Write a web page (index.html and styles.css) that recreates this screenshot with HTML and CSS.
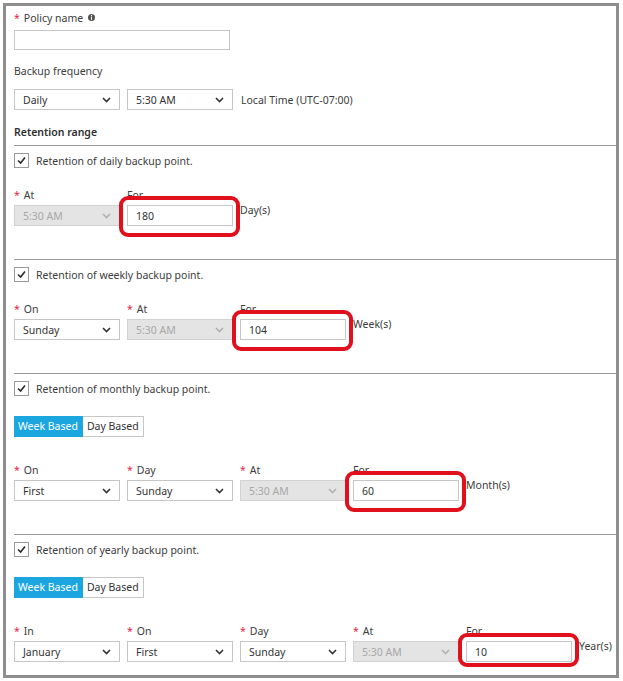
FILE: index.html
```html
<!DOCTYPE html>
<html lang="en">
<head>
    <meta charset="UTF-8">
    <meta name="viewport" content="width=device-width, initial-scale=1.0">
    <title>Backup Policy</title>
    <link rel="stylesheet" href="styles.css">
</head>
<body>
    <div class="panel">
        <div class="top-field">
            <label class="req">Policy name
                <svg class="info" width="7" height="7" viewBox="0 0 7 7"><circle cx="3.5" cy="3.5" r="3.5" fill="#555"/><rect x="3" y="1" width="1" height="1" fill="#fff"/><rect x="3" y="2.6" width="1" height="3.2" fill="#fff"/></svg>
            </label>
            <input class="text-input wide" type="text">
        </div>

        <div class="top-field freq">
            <label>Backup frequency</label>
            <div class="freq-row">
                <div class="select">Daily<svg class="chev" viewBox="0 0 9 6"><path d="M1 1l3.5 3.5L8 1"/></svg></div>
                <div class="select">5:30 AM<svg class="chev" viewBox="0 0 9 6"><path d="M1 1l3.5 3.5L8 1"/></svg></div>
                <span class="note">Local Time (UTC-07:00)</span>
            </div>
        </div>

        <h3>Retention range</h3>

        <!-- daily -->
        <div class="retention">
            <div class="check-row"><span class="checkbox"><svg viewBox="0 0 15 15"><path d="M3.5 7.5l3 3 5-6.5"/></svg></span>Retention of daily backup point.</div>
            <div class="fields">
                <div class="field">
                    <label class="req">At</label>
                    <div class="select disabled">5:30 AM<svg class="chev" viewBox="0 0 9 6"><path d="M1 1l3.5 3.5L8 1"/></svg></div>
                </div>
                <div class="field">
                    <label>For</label>
                    <div class="control">
                        <span class="marked"><input class="text-input" type="text" value="180"></span>
                        <span class="unit">Day(s)</span>
                    </div>
                </div>
            </div>
        </div>

        <!-- weekly -->
        <div class="retention">
            <div class="check-row"><span class="checkbox"><svg viewBox="0 0 15 15"><path d="M3.5 7.5l3 3 5-6.5"/></svg></span>Retention of weekly backup point.</div>
            <div class="fields">
                <div class="field">
                    <label class="req">On</label>
                    <div class="select">Sunday<svg class="chev" viewBox="0 0 9 6"><path d="M1 1l3.5 3.5L8 1"/></svg></div>
                </div>
                <div class="field">
                    <label class="req">At</label>
                    <div class="select disabled">5:30 AM<svg class="chev" viewBox="0 0 9 6"><path d="M1 1l3.5 3.5L8 1"/></svg></div>
                </div>
                <div class="field">
                    <label>For</label>
                    <div class="control">
                        <span class="marked"><input class="text-input" type="text" value="104"></span>
                        <span class="unit">Week(s)</span>
                    </div>
                </div>
            </div>
        </div>

        <!-- monthly -->
        <div class="retention">
            <div class="check-row"><span class="checkbox"><svg viewBox="0 0 15 15"><path d="M3.5 7.5l3 3 5-6.5"/></svg></span>Retention of monthly backup point.</div>
            <div class="toggle"><span class="on">Week Based</span><span>Day Based</span></div>
            <div class="fields">
                <div class="field">
                    <label class="req">On</label>
                    <div class="select">First<svg class="chev" viewBox="0 0 9 6"><path d="M1 1l3.5 3.5L8 1"/></svg></div>
                </div>
                <div class="field">
                    <label class="req">Day</label>
                    <div class="select">Sunday<svg class="chev" viewBox="0 0 9 6"><path d="M1 1l3.5 3.5L8 1"/></svg></div>
                </div>
                <div class="field">
                    <label class="req">At</label>
                    <div class="select disabled">5:30 AM<svg class="chev" viewBox="0 0 9 6"><path d="M1 1l3.5 3.5L8 1"/></svg></div>
                </div>
                <div class="field">
                    <label>For</label>
                    <div class="control">
                        <span class="marked"><input class="text-input" type="text" value="60"></span>
                        <span class="unit">Month(s)</span>
                    </div>
                </div>
            </div>
        </div>

        <!-- yearly -->
        <div class="retention last">
            <div class="check-row"><span class="checkbox"><svg viewBox="0 0 15 15"><path d="M3.5 7.5l3 3 5-6.5"/></svg></span>Retention of yearly backup point.</div>
            <div class="toggle"><span class="on">Week Based</span><span>Day Based</span></div>
            <div class="fields">
                <div class="field">
                    <label class="req">In</label>
                    <div class="select">January<svg class="chev" viewBox="0 0 9 6"><path d="M1 1l3.5 3.5L8 1"/></svg></div>
                </div>
                <div class="field">
                    <label class="req">On</label>
                    <div class="select">First<svg class="chev" viewBox="0 0 9 6"><path d="M1 1l3.5 3.5L8 1"/></svg></div>
                </div>
                <div class="field">
                    <label class="req">Day</label>
                    <div class="select">Sunday<svg class="chev" viewBox="0 0 9 6"><path d="M1 1l3.5 3.5L8 1"/></svg></div>
                </div>
                <div class="field">
                    <label class="req">At</label>
                    <div class="select disabled">5:30 AM<svg class="chev" viewBox="0 0 9 6"><path d="M1 1l3.5 3.5L8 1"/></svg></div>
                </div>
                <div class="field">
                    <label>For</label>
                    <div class="control">
                        <span class="marked short"><input class="text-input" type="text" value="10"></span>
                        <span class="unit">Year(s)</span>
                    </div>
                </div>
            </div>
        </div>
    </div>
</body>
</html>
```

FILE: styles.css
```css
body {
    margin: 0;
    padding: 0;
    font-family: "Noto Sans", "Open Sans", sans-serif;
    font-size: 10.5px;
    color: #3c3c3c;
    background: #fff;
}

.panel {
    width: 602px;
    margin: 3px 0 0 3px;
    border: 3px solid #8e8e8e;
    padding: 5px 0 13px 8px;
}

label {
    display: block;
    height: 14px;
    line-height: 14px;
}

.req::before {
    content: "*";
    color: #e3264a;
    margin-right: 4px;
}

.info {
    margin-left: 2px;
    vertical-align: 1px;
}

.top-field input {
    margin-top: 5px;
}

.freq {
    margin-top: 14px;
}

.freq-row {
    display: flex;
    align-items: center;
    gap: 7px;
    margin-top: 11px;
}

.note {
    margin-left: 1px;
}

h3 {
    margin: 15px 0 0 0;
    font-size: 10.5px;
    font-weight: 600;
    line-height: 14px;
    color: #2e2e2e;
}

.text-input {
    display: block;
    box-sizing: border-box;
    width: 106px;
    height: 21px;
    border: 1px solid #c6c6c6;
    padding: 0 8px;
    font-family: inherit;
    font-size: 10.5px;
    color: #333;
    background: #fff;
    outline: none;
}

.text-input.wide {
    width: 216px;
    height: 20px;
}

.select {
    box-sizing: border-box;
    width: 106px;
    height: 21px;
    border: 1px solid #c6c6c6;
    padding: 0 8px;
    display: flex;
    align-items: center;
    justify-content: space-between;
    background: #fff;
    color: #333;
}

.chev {
    width: 9px;
    height: 6px;
    fill: none;
    stroke: #333;
    stroke-width: 1.6;
}

.select.disabled {
    background: #e4e4e4;
    border-color: #d2d2d2;
    color: #a8a8a8;
}

.select.disabled .chev {
    stroke: #b0b0b0;
}

.retention {
    border-top: 1px solid #9c9c9c;
    margin-top: 6px;
    padding: 7px 0 33px 0;
}

.retention + .retention {
    margin-top: 0;
}

.retention.last {
    padding-bottom: 0;
}

.check-row {
    display: flex;
    align-items: center;
    gap: 7px;
    height: 15px;
}

.checkbox {
    box-sizing: border-box;
    width: 15px;
    height: 15px;
    border: 1px solid #9a9a9a;
    background: #fff;
}

.checkbox svg {
    display: block;
    width: 13px;
    height: 13px;
    fill: none;
    stroke: #2a2a2a;
    stroke-width: 1.8;
}

.toggle {
    display: flex;
    width: max-content;
    margin-top: 20px;
    height: 21px;
}

.toggle span {
    box-sizing: border-box;
    height: 21px;
    line-height: 19px;
    padding: 0 4px;
    border: 1px solid #c6c6c6;
    border-left: none;
    color: #333;
}

.toggle span.on {
    background: #1ba6e0;
    border-color: #1ba6e0;
    color: #fff;
}

.fields {
    display: flex;
    gap: 7px;
    margin-top: 20px;
}

.toggle + .fields {
    margin-top: 26px;
}

.field label {
    margin-bottom: 3px;
}

.control {
    display: flex;
    align-items: flex-start;
    gap: 7px;
}

.marked {
    position: relative;
    display: block;
}

/* hand-drawn style highlight round the retention value */
.marked::after {
    content: "";
    position: absolute;
    left: -8px;
    right: -7px;
    top: -9px;
    bottom: -11px;
    border: 4px solid #e0101c;
    border-radius: 9px;
    pointer-events: none;
}

.marked.short::after {
    top: -8px;
    bottom: -5px;
}

.unit {
    line-height: 14px;
    margin-top: -2px;
}
```
